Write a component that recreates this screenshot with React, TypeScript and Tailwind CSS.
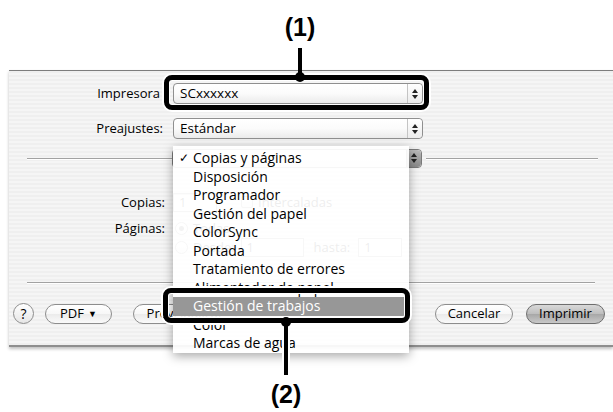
import React from "react";

function Stepper({ dark = false }: { dark?: boolean }) {
  return (
    <div
      className={
        "flex h-full w-[15px] flex-col items-center justify-center gap-[2px] border-l " +
        (dark
          ? "border-[#6d6d6d] bg-[linear-gradient(#b9b9b9,#8a8a8a)] rounded-r-[4px]"
          : "border-[#c4c4c4] bg-[linear-gradient(#ffffff,#ececec)] rounded-r-[4px]")
      }
    >
      <svg width="6" height="4" viewBox="0 0 6 4">
        <path d="M3 0 L6 4 L0 4 Z" fill="#222" />
      </svg>
      <svg width="6" height="4" viewBox="0 0 6 4">
        <path d="M0 0 L6 0 L3 4 Z" fill="#222" />
      </svg>
    </div>
  );
}

function Select({ text }: { text: string }) {
  return (
    <div className="flex h-[21px] w-[250px] items-stretch rounded-[4px] border border-[#8f8f8f] bg-[linear-gradient(#ffffff_0%,#fbfbfb_50%,#ebebeb_100%)] shadow-[inset_0_1px_0_#fff]">
      <div className="flex flex-1 items-center pl-[6px] text-[13.5px] leading-none text-black">
        {text}
      </div>
      <Stepper />
    </div>
  );
}

function PillButton({
  children,
  className = "",
  dark = false,
}: {
  children: React.ReactNode;
  className?: string;
  dark?: boolean;
}) {
  return (
    <div
      className={
        "flex h-[20px] items-center justify-center rounded-full border text-[13px] leading-none text-black " +
        (dark
          ? "border-[#6e6e6e] bg-[linear-gradient(#d9d9d9_0%,#bdbdbd_50%,#a7a7a7_51%,#c8c8c8_100%)] "
          : "border-[#8d8d8d] bg-[linear-gradient(#ffffff_0%,#f7f7f7_50%,#ebebeb_51%,#fafafa_100%)] ") +
        className
      }
    >
      {children}
    </div>
  );
}

const menuItems = [
  "Copias y páginas",
  "Disposición",
  "Programador",
  "Gestión del papel",
  "ColorSync",
  "Portada",
  "Tratamiento de errores",
  "Alimentador de papel",
  "Gestión de trabajos",
  "Color",
  "Marcas de agua",
];

export default function App() {
  return (
    <div className="relative h-[412px] w-[613px] overflow-hidden bg-white font-['Open_Sans',sans-serif] text-black">
      <div className="pt-[70px]">
        {/* Dialog */}
        <div className="ml-[9px] w-[604px] overflow-hidden border-t border-[#7d7d7d] border-b-2 border-b-[#8e8e8e] bg-[image:repeating-linear-gradient(180deg,#efefef_0px,#efefef_2px,#f5f5f5_2px,#f5f5f5_4px)] shadow-[0_2px_3px_rgba(0,0,0,0.25)]">
          <div className="pt-[12px]">
            <div className="flex h-[21px] items-center">
              <div className="w-[151px] text-right text-[13px] leading-none">Impresora</div>
              <div className="ml-[13px]">
                <Select text="SCxxxxxx" />
              </div>
            </div>
            <div className="mt-[14px] flex h-[21px] items-center">
              <div className="w-[154px] text-right text-[13px] leading-none">Preajustes:</div>
              <div className="ml-[10px]">
                <Select text="Estándar" />
              </div>
            </div>

            {/* Separator with popup (its title is hidden under the open menu) */}
            <div className="mt-[9px] flex h-[20px] items-center pl-[18px]">
              <div className="h-0 w-[145px] border-t border-[#a2a2a2] shadow-[0_1px_0_#fff]" />
              <div className="flex h-[19px] w-[250px] items-stretch rounded-[4px] border border-[#7a7a7a] bg-[linear-gradient(#ffffff,#ebebeb)]">
                <div className="flex-1" />
                <Stepper dark />
              </div>
              <div className="ml-[4px] h-0 w-[172px] border-t border-[#a2a2a2] shadow-[0_1px_0_#fff]" />
            </div>

            {/* Copias row */}
            <div className="mt-[24px] flex h-[20px] items-center">
              <div className="w-[156px] text-right text-[13px] leading-none">Copias:</div>
              <div className="ml-[8px] flex h-[19px] w-[44px] items-center border border-[#8a8a8a] bg-white pl-[5px] text-[13px] leading-none shadow-[inset_0_1px_1px_rgba(0,0,0,0.2)]">
                1
              </div>
              <div className="ml-[24px] h-[12px] w-[12px] rounded-[2px] border border-[#888] bg-[linear-gradient(#fff,#e6e6e6)]" />
              <div className="ml-[5px] text-[13px] leading-none">Intercaladas</div>
            </div>

            {/* Paginas rows */}
            <div className="mt-[7px] flex h-[19px] items-center">
              <div className="w-[156px] text-right text-[13px] leading-none">Páginas:</div>
              <div className="ml-[10px] h-[13px] w-[13px] rounded-full border border-[#888] bg-[radial-gradient(circle,#555_0,#555_2px,#fff_3px)]" />
              <div className="ml-[5px] text-[13px] leading-none">Todas</div>
            </div>
            <div className="flex h-[19px] items-center">
              <div className="w-[156px]" />
              <div className="ml-[10px] h-[13px] w-[13px] rounded-full border border-[#888] bg-[linear-gradient(#fff,#e6e6e6)]" />
              <div className="ml-[5px] text-[13px] leading-none">Desde:</div>
              <div className="ml-[6px] flex h-[19px] w-[63px] items-center border border-[#8a8a8a] bg-white pl-[5px] text-[13px] leading-none">
                1
              </div>
              <div className="ml-[10px] text-[13px] leading-none">hasta:</div>
              <div className="ml-[8px] flex h-[19px] w-[44px] items-center border border-[#8a8a8a] bg-white pl-[5px] text-[13px] leading-none">
                1
              </div>
            </div>

            {/* lower separator */}
            <div className="ml-[18px] mt-[25px] h-0 w-[568px] border-t border-[#a2a2a2] shadow-[0_1px_0_#fff]" />

            {/* Buttons */}
            <div className="mt-[20px] flex h-[21px] items-center pr-[8px]">
              <div className="ml-[4px] flex h-[21px] w-[21px] items-center justify-center rounded-full border border-[#8d8d8d] bg-[linear-gradient(#ffffff,#e6e6e6)] text-[14px] leading-none">
                ?
              </div>
              <PillButton className="ml-[11px] w-[67px] gap-[4px]">
                <span>PDF</span>
                <span className="text-[9px]">▼</span>
              </PillButton>
              <PillButton className="ml-[21px] w-[104px]">Previsualizar</PillButton>
              <PillButton className="ml-auto w-[78px]">Cancelar</PillButton>
              <PillButton dark className="ml-[13px] w-[79px]">
                Imprimir
              </PillButton>
            </div>
            <div className="h-[21px]" />
          </div>
        </div>
      </div>

      {/* Popup menu */}
      <div className="absolute left-[173px] top-[146px] h-[207px] w-[236px] overflow-hidden bg-white/[0.93] pt-[3px] shadow-[0_3px_10px_rgba(0,0,0,0.35)]">
        {menuItems.map((item, i) => (
          <div
            key={item}
            className={
              "relative flex h-[18.5px] items-center pl-[20px] text-[14px] leading-none " +
              (i === 8 ? "bg-[#979797] text-white" : "text-black")
            }
          >
            {i === 0 && <span className="absolute left-[6px] text-[12px]">✓</span>}
            {item}
          </div>
        ))}
      </div>

      {/* Callout 1 */}
      <div className="absolute left-[275px] top-[12px] w-[50px] text-center font-['Liberation_Sans',sans-serif] text-[25px] font-bold leading-[30px]">
        (1)
      </div>
      <div className="absolute left-[298px] top-[48px] h-[30px] w-[4px] bg-black" />
      <div className="absolute left-[164px] top-[75px] h-[35px] w-[265px] rounded-[8px] border-[5px] border-black shadow-[0_0_0_2px_#fff,inset_0_0_0_1px_#fff]" />
      <div className="absolute left-[295px] top-[72px] h-[10px] w-[10px] rounded-full bg-black" />

      {/* Callout 2 */}
      <div className="absolute left-[163px] top-[288px] h-[35px] w-[247px] rounded-[8px] border-[5px] border-black shadow-[0_0_0_2px_#fff,inset_0_0_0_1px_#fff]" />
      <div className="absolute left-[282px] top-[322px] h-[53px] w-[8px] border-x-2 border-white bg-black" />
      <div className="absolute left-[281px] top-[317px] h-[10px] w-[10px] rounded-full bg-black" />
      <div className="absolute left-[261px] top-[379px] w-[50px] text-center font-['Liberation_Sans',sans-serif] text-[25px] font-bold leading-[30px]">
        (2)
      </div>
    </div>
  );
}
